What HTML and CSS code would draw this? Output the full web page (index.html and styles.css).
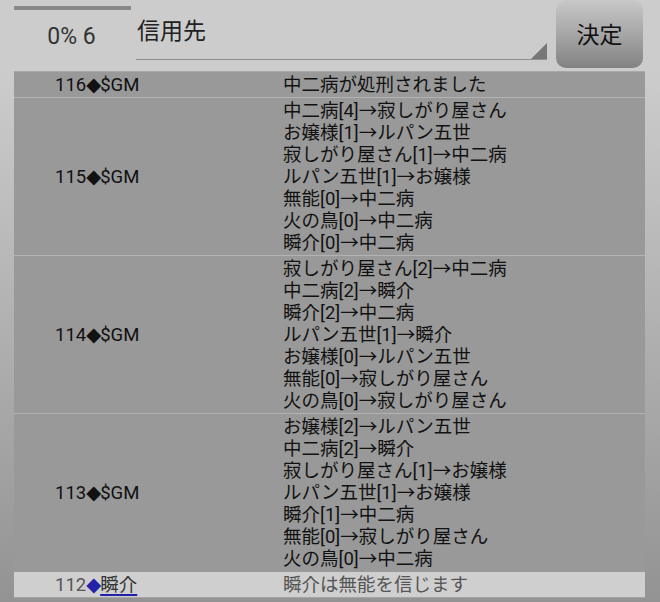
FILE: index.html
```html
<!DOCTYPE html>
<html lang="ja">
<head>
<meta charset="utf-8">
<link rel="stylesheet" href="styles.css">
</head>
<body>
<div class="header">
  <div class="progress">
    <div class="bar"></div>
    <div class="pct">0% 6</div>
  </div>
  <div class="select">
    <span class="select-text">信用先</span>
    <span class="tri"></span>
  </div>
  <button class="btn">決定</button>
</div>
<div class="log">
  <div class="row">
    <div class="who">116<span class="dia">◆</span>$GM</div>
    <div class="msg">中二病が処刑されました</div>
  </div>
  <div class="row">
    <div class="who">115<span class="dia">◆</span>$GM</div>
    <div class="msg">中二病[4]→寂しがり屋さん<br>お嬢様[1]→ルパン五世<br>寂しがり屋さん[1]→中二病<br>ルパン五世[1]→お嬢様<br>無能[0]→中二病<br>火の鳥[0]→中二病<br>瞬介[0]→中二病</div>
  </div>
  <div class="row">
    <div class="who">114<span class="dia">◆</span>$GM</div>
    <div class="msg">寂しがり屋さん[2]→中二病<br>中二病[2]→瞬介<br>瞬介[2]→中二病<br>ルパン五世[1]→瞬介<br>お嬢様[0]→ルパン五世<br>無能[0]→寂しがり屋さん<br>火の鳥[0]→寂しがり屋さん</div>
  </div>
  <div class="row">
    <div class="who">113<span class="dia">◆</span>$GM</div>
    <div class="msg">お嬢様[2]→ルパン五世<br>中二病[2]→瞬介<br>寂しがり屋さん[1]→お嬢様<br>ルパン五世[1]→お嬢様<br>瞬介[1]→中二病<br>無能[0]→寂しがり屋さん<br>火の鳥[0]→中二病</div>
  </div>
  <div class="row row-light">
    <div class="who">112<span class="dia dia-blue">◆</span><span class="name">瞬介</span></div>
    <div class="msg">瞬介は無能を信じます</div>
  </div>
</div>
</body>
</html>
```
FILE: styles.css
```css
html, body {
  margin: 0;
  padding: 0;
}
body {
  width: 660px;
  height: 602px;
  overflow: hidden;
  font-family: Roboto, "Noto Sans CJK JP", sans-serif;
  background: linear-gradient(to bottom, #cdcdcd 0px, #cccccc 70px, #939393 602px);
  color: #111;
}
.header {
  display: flex;
  align-items: flex-start;
  height: 71px;
  background: #cccccc;
}
.progress {
  margin-left: 14px;
  width: 117px;
  padding-top: 6px;
}
.bar {
  height: 4px;
  background: #888888;
}
.pct {
  text-align: center;
  font-size: 23px;
  line-height: 28px;
  margin-top: 13px;
  color: #333;
  padding-right: 2px;
}
.select {
  position: relative;
  margin-left: 5px;
  width: 411px;
  height: 60px;
  border-bottom: 1px solid #8e8e8e;
  box-sizing: border-box;
}
.select-text {
  display: block;
  padding-left: 1px;
  padding-top: 17px;
  font-size: 23px;
  line-height: 30px;
  color: #222;
}
.tri {
  position: absolute;
  right: 0;
  bottom: 0;
  width: 0;
  height: 0;
  border-left: 16px solid transparent;
  border-bottom: 16px solid #777;
}
.btn {
  margin-left: 9px;
  width: 87px;
  height: 68px;
  border: none;
  border-radius: 10px;
  background: linear-gradient(to bottom, #c8c8c8 0%, #aaaaaa 45%, #828282 100%);
  font-family: Roboto, "Noto Sans CJK JP", sans-serif;
  font-size: 23px;
  color: #111;
  padding: 0;
  padding-bottom: 2px;
}
.log {
  margin: 0 15px 0 14px;
  border-top: 1px solid #a8a8a8;
}
.row {
  display: flex;
  align-items: center;
  background: #999999;
  border-bottom: 1px solid #b3b3b3;
  padding: 2px 0 1px;
  font-size: 18.5px;
  line-height: 22px;
}
.row-light {
  background: #cfcfcf;
  border-top: 1px solid #9a9a9a;
  border-bottom: 1px solid #a4a4a4;
  color: #555;
  margin-top: -1px;
}
.who {
  width: 228px;
  padding-left: 41px;
  flex: none;
}
.msg {
  flex: 1;
}
.dia {
  font-family: "DejaVu Sans", sans-serif;
  font-size: 19.5px;
  letter-spacing: -1px;
}
.dia-blue {
  color: #2323a8;
}
.name {
  color: #333;
  text-decoration: underline;
  text-decoration-color: #2020a8;
  text-decoration-thickness: 2px;
  text-underline-offset: 3px;
}
```
